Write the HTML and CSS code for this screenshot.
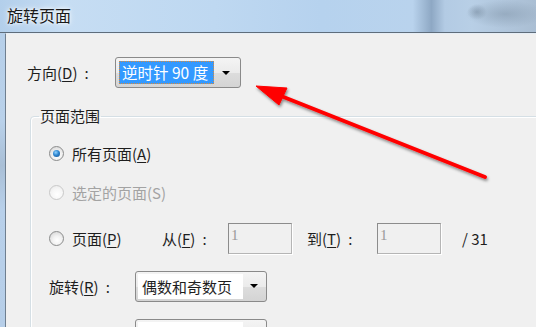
FILE: index.html
```html
<!DOCTYPE html>
<html lang="zh-CN">
<head>
    <meta charset="UTF-8">
    <title>旋转页面</title>
    <link rel="stylesheet" href="styles.css">
</head>
<body>
    <div class="window">
        <div class="titlebar">旋转页面</div>
        <div class="frame">
            <div class="dialog">
                <div class="dir-row">
                    <span class="dir-label">方向(<u>D</u>)<span class="colon">:</span></span>
                    <div class="combo combo-dir">
                        <span class="combo-text selected">逆时针 90 度</span>
                        <span class="combo-btn"><i class="tri"></i></span>
                    </div>
                </div>

                <fieldset class="range">
                    <legend>页面范围</legend>

                    <div class="row r1">
                        <span class="radio checked"></span>
                        <span class="opt">所有页面(<u>A</u>)</span>
                    </div>
                    <div class="row r2 disabled">
                        <span class="radio"></span>
                        <span class="opt">选定的页面(S)</span>
                    </div>
                    <div class="row r3">
                        <span class="radio"></span>
                        <span class="opt opt-pages">页面(<u>P</u>)</span>
                        <span class="from">从(<u>F</u>)<span class="colon">:</span></span>
                        <span class="field">1</span>
                        <span class="to">到(<u>T</u>)<span class="colon">:</span></span>
                        <span class="field">1</span>
                        <span class="total">/ 31</span>
                    </div>
                    <div class="row r4">
                        <span class="rot-label">旋转(<u>R</u>)<span class="colon">:</span></span>
                        <div class="combo combo-wide">
                            <span class="combo-text">偶数和奇数页</span>
                            <span class="combo-btn"><i class="tri"></i></span>
                        </div>
                    </div>
                    <div class="row r5">
                        <span class="rot-label"></span>
                        <div class="combo combo-wide">
                            <span class="combo-text">纵向和横向页面</span>
                            <span class="combo-btn"><i class="tri"></i></span>
                        </div>
                    </div>
                </fieldset>
            </div>
        </div>

        <svg class="arrow" width="536" height="327" viewBox="0 0 536 327">
            <defs>
                <filter id="shadow" x="-10%" y="-20%" width="120%" height="140%">
                    <feDropShadow dx="1" dy="2" stdDeviation="1.6" flood-color="#000" flood-opacity="0.45"/>
                </filter>
            </defs>
            <g filter="url(#shadow)" fill="#ff0000" stroke="#ff0000">
                <line x1="485" y1="177" x2="276" y2="94" stroke-width="4" stroke-linecap="round"/>
                <polygon points="256,86 287,88 279,105" stroke-width="1" stroke-linejoin="round"/>
            </g>
        </svg>
    </div>
</body>
</html>
```

FILE: styles.css
```css
html, body {
    margin: 0;
    padding: 0;
}

body {
    width: 536px;
    height: 327px;
    overflow: hidden;
    font-family: "Noto Sans CJK SC", "Noto Sans", sans-serif;
    font-size: 15px;
    color: #1e1e1e;
    background: #f0f0f0;
}

.window {
    position: relative;
    width: 536px;
    height: 327px;
    overflow: hidden;
}

.titlebar {
    height: 32px;
    border-bottom: 1px solid #5f6d7b;
    padding-left: 7px;
    line-height: 31px;
    font-size: 16px;
    color: #1a1a1a;
    text-shadow: 0 0 6px #fff, 0 0 3px #fff;
    background:
        radial-gradient(ellipse 40px 14px at 505px 14px, rgba(120,140,160,0.45), rgba(120,140,160,0)),
        radial-gradient(ellipse 10px 8px at 477px 12px, rgba(110,130,150,0.5), rgba(110,130,150,0)),
        linear-gradient(to right, #b3cfeb 0, #c6ddf3 12%, #bed8f1 40%, #b6d2ee 60%, #b9d3ed 77%, #8ea8c4 80.5%, #b3cbe4 83%, #b8cfe6 88%, #aabed3 100%);
}

.frame {
    height: 294px;
    padding-left: 5px;
    background: linear-gradient(to bottom, #b6cfe9 0, #b9d1ea 30%, #a9bfd6 45%, #b8d0ea 60%, #b6cee8 100%);
}

.dialog {
    height: 294px;
    border-left: 1px solid #6f7f90;
    border-top: 1px solid #e6eef6;
    box-sizing: border-box;
    background: #f0f0f0;
    padding: 23px 0 0 21px;
    overflow: hidden;
}

u {
    text-decoration: underline;
    text-underline-offset: 2px;
}

.colon {
    margin-left: 7px;
}

/* direction row */
.dir-row {
    display: flex;
    align-items: center;
    height: 31px;
}

.dir-label {
    width: 88px;
}

.combo {
    display: flex;
    align-items: stretch;
    box-sizing: border-box;
    height: 31px;
    border: 1px solid #8a8a8a;
    border-radius: 3px;
    background: linear-gradient(to bottom, #f4f4f4 0, #ebebeb 50%, #dddddd 51%, #d4d4d4 100%);
    padding: 3px;
}

.combo-dir {
    width: 126px;
}

.combo-wide {
    width: 132px;
    padding: 2px 1px 2px 2px;
}

.combo-text {
    display: flex;
    align-items: center;
    padding-left: 3px;
    white-space: nowrap;
    line-height: 1;
}

.combo-text.selected {
    width: 95px;
    box-sizing: border-box;
    background: #3399ff;
    color: #fff;
    font-size: 15.5px;
    outline: 1px dotted #d98a3a;
    outline-offset: -1px;
}

.combo-wide .combo-text {
    width: 105px;
    box-sizing: border-box;
    background: #fff;
    padding-left: 4px;
}

.combo-btn {
    flex: 1;
    display: flex;
    align-items: center;
    justify-content: center;
}

.tri {
    width: 0;
    height: 0;
    border-left: 4px solid transparent;
    border-right: 4px solid transparent;
    border-top: 4px solid #000;
}

/* page range group */
.range {
    margin: 18px 0 0 3px;
    width: 600px;
    height: 320px;
    padding: 0 0 0 8px;
    border: 1px solid #d5dfe5;
    border-radius: 4px;
    box-shadow: inset 1px 1px 0 #fff;
}

.range legend {
    padding: 0 1px;
    line-height: 20px;
}

.row {
    display: flex;
    align-items: center;
    height: 32px;
    padding-left: 10px;
}

.r1 { margin-top: 11px; }
.r2 { margin-top: 7px; }
.r3 { margin-top: 14px; }
.r4 { margin-top: 16px; }
.r5 { margin-top: 16px; }

.radio {
    position: relative;
    width: 13px;
    height: 13px;
    border: 1px solid #8b8c8c;
    border-radius: 50%;
    background: radial-gradient(circle at 55% 65%, #ffffff 0, #f2f2f2 40%, #cfcfcf 100%);
    margin-right: 8px;
    flex: none;
}

.radio.checked::after {
    content: "";
    position: absolute;
    left: 3px;
    top: 3px;
    width: 7px;
    height: 7px;
    border-radius: 50%;
    background: radial-gradient(circle at 40% 35%, #8fd2ff 0, #2f86d0 45%, #154f8c 100%);
}

.disabled {
    color: #a3a3a3;
}

.disabled .radio {
    border-color: #c9c9c9;
    background: radial-gradient(circle at 55% 65%, #ffffff 0, #f6f6f6 50%, #e6e6e6 100%);
}

.opt-pages {
    width: 90px;
}

.from {
    width: 66px;
}

.to {
    width: 70px;
    margin-left: 15px;
}

.field {
    box-sizing: border-box;
    width: 64px;
    height: 31px;
    border: 1px solid #b5b5b5;
    border-top-color: #8c8c8c;
    border-left-color: #8c8c8c;
    box-shadow: 1px 1px 0 #fff;
    background: #f0f0f0;
    color: #9a9a9a;
    font-family: "Liberation Serif", serif;
    font-size: 15px;
    line-height: 22px;
    padding-left: 2px;
}

.total {
    margin-left: 21px;
}

.rot-label {
    width: 86px;
}

.arrow {
    position: absolute;
    left: 0;
    top: 0;
    pointer-events: none;
}
```
